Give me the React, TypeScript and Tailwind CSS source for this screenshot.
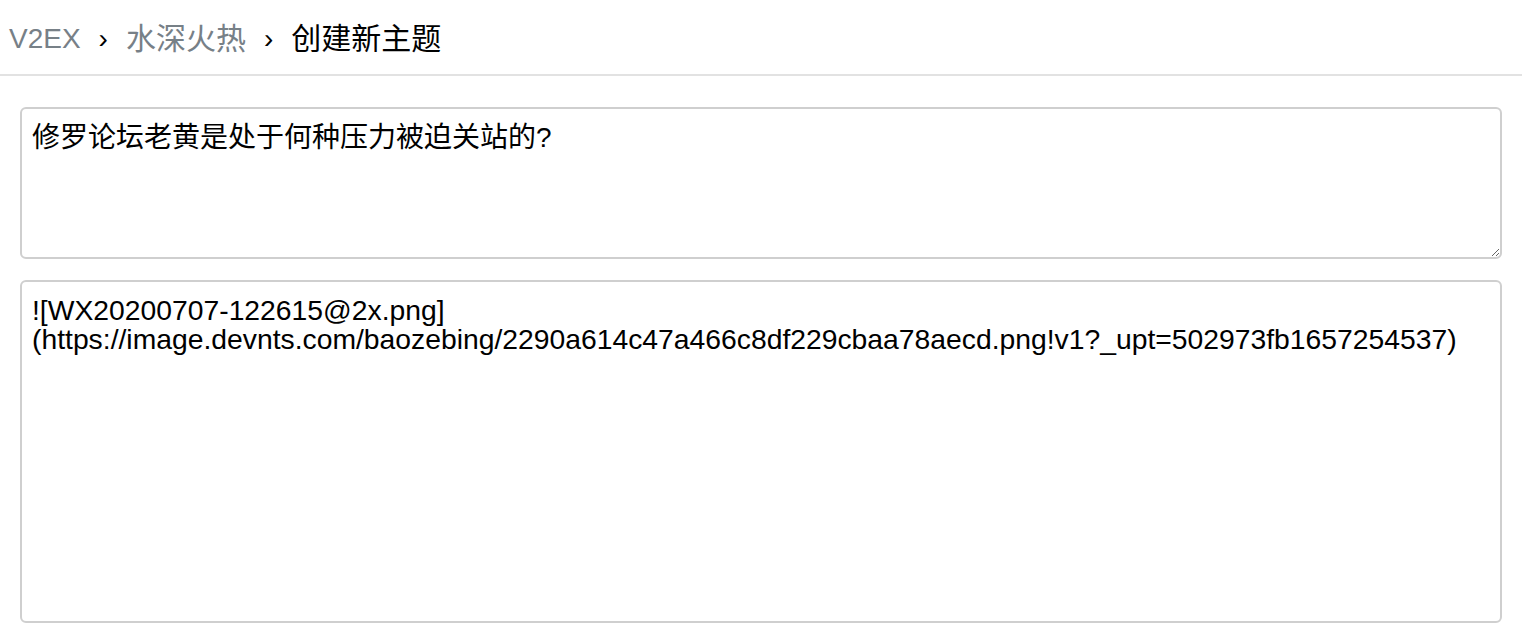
export default function App() {
  return (
    <div className="min-h-screen bg-white font-['Liberation_Sans','Noto_Sans_CJK_SC',sans-serif]">
      <div className="h-[76px] border-b-2 border-[#e2e2e2] flex items-center pt-[3px] px-[9px] text-[28px] leading-none">
        <span className="text-[#778087]">V2EX</span>
        <span className="mx-[18px] text-black">›</span>
        <span className="text-[#778087] text-[30px]">水深火热</span>
        <span className="mx-[18px] text-black">›</span>
        <span className="text-black text-[30px]">创建新主题</span>
      </div>
      <div className="px-[20px] pt-[31px] flex flex-col gap-[21px]">
        <textarea
          className="w-full h-[152px] border-2 border-[#cfcfcf] rounded-[6px] px-[10px] pt-[12px] pb-[10px] text-[28px] leading-[1.2] text-black outline-none resize-y"
          defaultValue="修罗论坛老黄是处于何种压力被迫关站的?"
        />
        <textarea
          className="w-full h-[343px] border-2 border-[#cfcfcf] rounded-[6px] px-[10px] pt-[14px] pb-[10px] text-[28.3px] leading-[1.02] text-black outline-none resize-none"
          defaultValue="![WX20200707-122615@2x.png](https://image.devnts.com/baozebing/2290a614c47a466c8df229cbaa78aecd.png!v1?_upt=502973fb1657254537)"
        />
      </div>
    </div>
  );
}
